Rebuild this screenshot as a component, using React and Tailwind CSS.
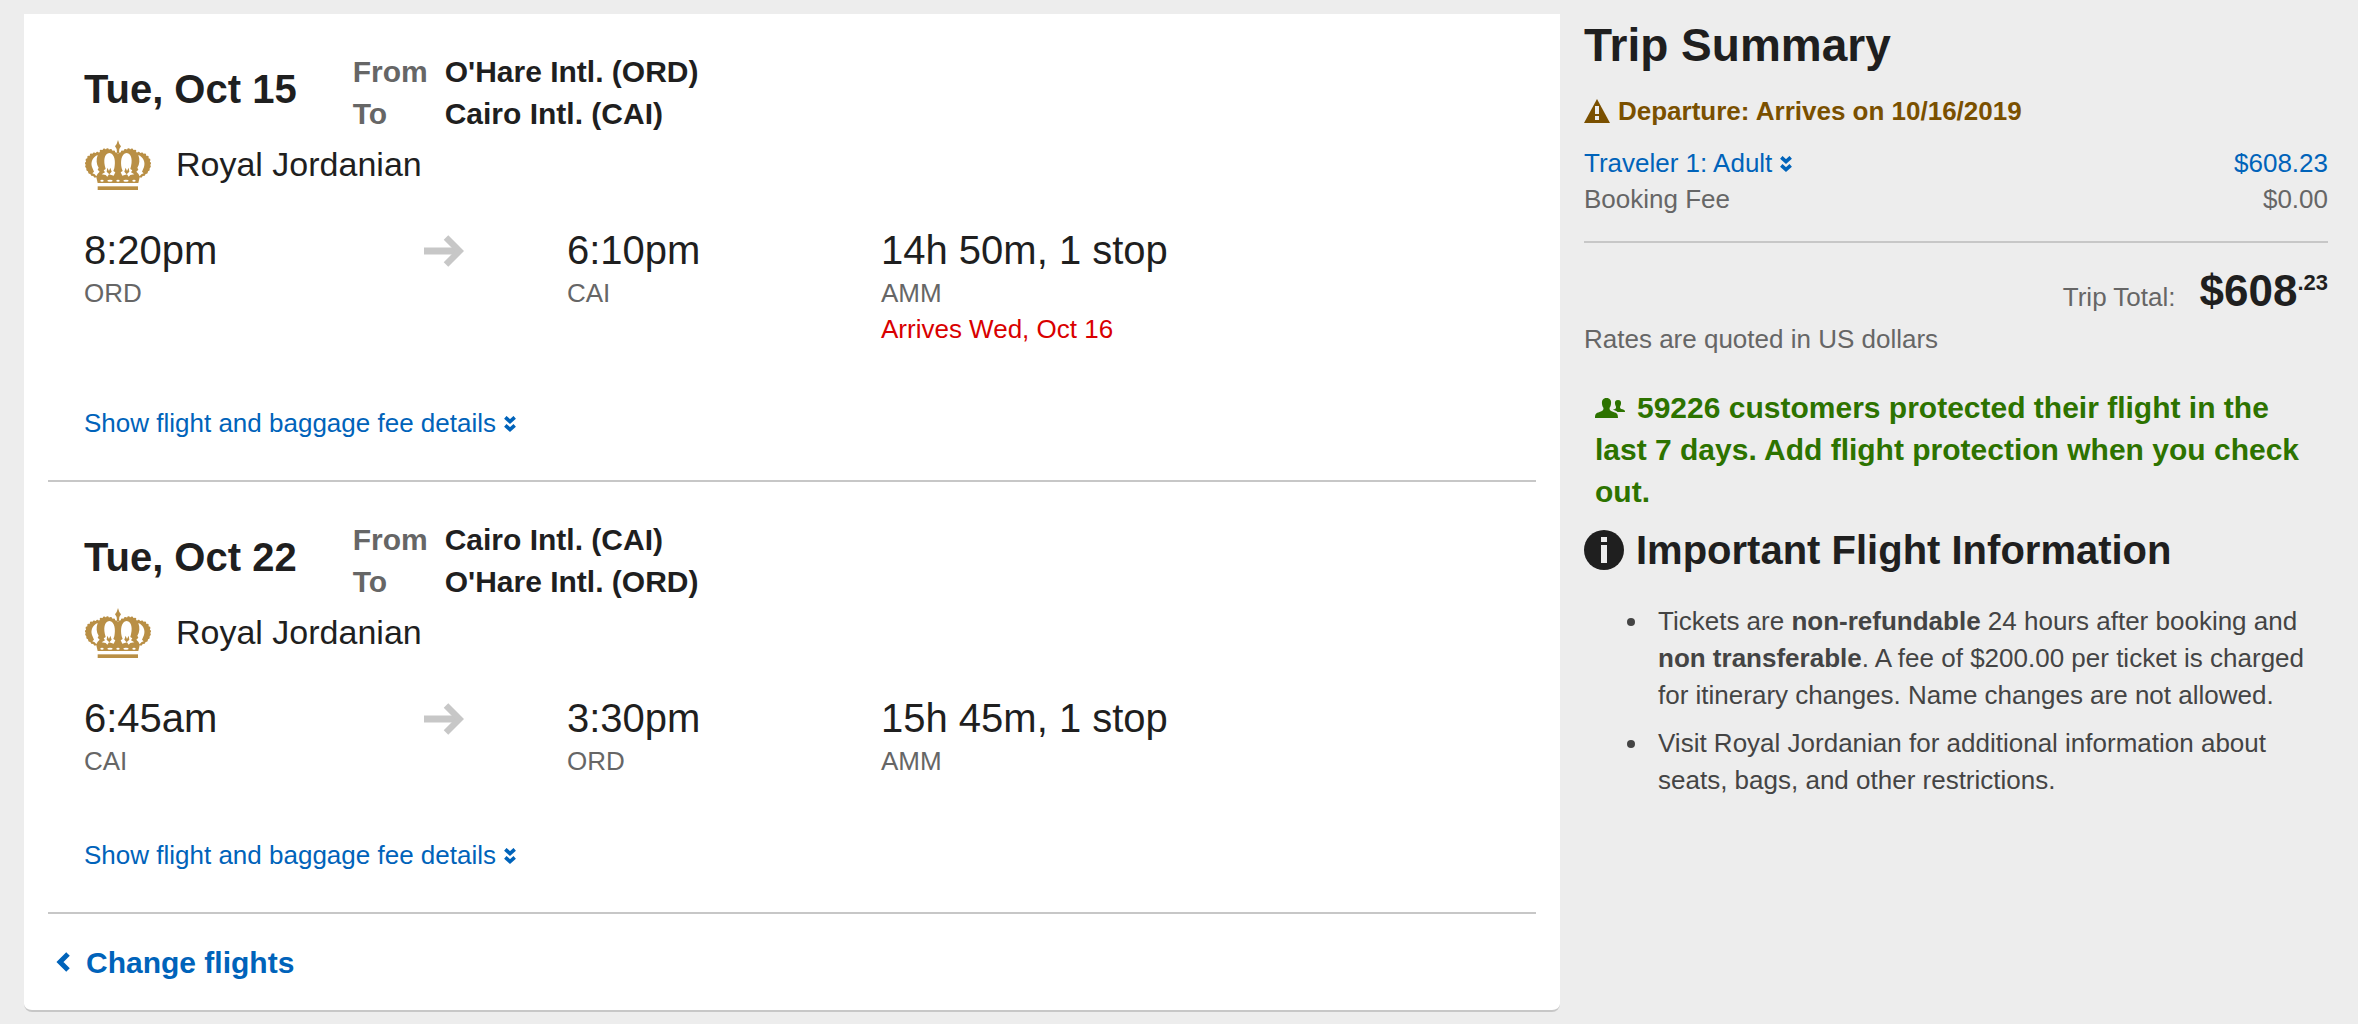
import React from 'react';

const flights = [
  {
    date: 'Tue, Oct 15',
    from: "O'Hare Intl. (ORD)",
    to: 'Cairo Intl. (CAI)',
    airline: 'Royal Jordanian',
    departTime: '8:20pm',
    departCode: 'ORD',
    arriveTime: '6:10pm',
    arriveCode: 'CAI',
    duration: '14h 50m, 1 stop',
    stop: 'AMM',
    notice: 'Arrives Wed, Oct 16',
  },
  {
    date: 'Tue, Oct 22',
    from: 'Cairo Intl. (CAI)',
    to: "O'Hare Intl. (ORD)",
    airline: 'Royal Jordanian',
    departTime: '6:45am',
    departCode: 'CAI',
    arriveTime: '3:30pm',
    arriveCode: 'ORD',
    duration: '15h 45m, 1 stop',
    stop: 'AMM',
  },
];

const CrownLogo = () => (
  <svg className="w-[68px] h-[50px] shrink-0" viewBox="43 33 204 150" aria-hidden="true">
    <g fill="#b98f45">
      <path d="M145 33 L149 45 L154 52 L149 60 L148 72 H142 L141 60 L136 52 L141 45 Z" />
      <path d="M84 162 L80 145 C60 138 46 122 48 104 C49 86 62 72 82 71 C88 71 92 69 94 65 C108 56 130 61 145 76 C160 61 182 56 196 65 C198 69 202 71 208 71 C228 72 241 86 242 104 C244 122 230 138 210 145 L206 162 Z" />
      <rect x="84" y="172" width="121" height="11" />
    </g>
    {/* beaded edge */}
    <g fill="none" stroke="#b98f45" strokeWidth="8" strokeLinecap="round" strokeDasharray="0 10">
      <path d="M76 142 C55 132 45 112 52 92 C58 78 70 73 88 72" />
      <path d="M214 142 C235 132 245 112 238 92 C232 78 220 73 202 72" />
      <path d="M94 66 C108 58 130 62 143 77" />
      <path d="M196 66 C182 58 160 62 147 77" />
    </g>
    <g fill="#fff">
      <path d="M84 78 C70 84 62 98 67 114 L73 128 L68 133 L75 136 L80 142 L84 134 L90 128 L84 122 L87 116 C80 106 79 92 84 78 Z" />
      <path d="M119 72 C104 74 100 94 108 120 L102 124 L106 130 L96 136 L108 138 L113 143 L118 136 L132 140 L137 130 L131 126 L134 118 C138 98 136 74 119 72 Z" />
      <path d="M206 78 C220 84 228 98 223 114 L217 128 L222 133 L215 136 L210 142 L206 134 L200 128 L206 122 L203 116 C210 106 211 92 206 78 Z" />
      <path d="M171 72 C186 74 190 94 182 120 L188 124 L184 130 L194 136 L182 138 L177 143 L172 136 L158 140 L153 130 L159 126 L156 118 C152 98 154 74 171 72 Z" />
      <ellipse cx="97" cy="155" rx="5" ry="3" />
      <ellipse cx="121" cy="155" rx="8" ry="3" />
      <ellipse cx="145" cy="155" rx="5" ry="3" />
      <ellipse cx="169" cy="155" rx="8" ry="3" />
      <ellipse cx="193" cy="155" rx="5" ry="3" />
    </g>
    <g fill="#b98f45">
      <path d="M113 116 L118 126 L122 116 L126 128 L119 136 L111 128 Z" />
      <path d="M177 116 L172 126 L168 116 L164 128 L171 136 L179 128 Z" />
    </g>
  </svg>
);

const DoubleChevron = () => (
  <svg className="inline-block ml-2 w-3 h-4 align-baseline" viewBox="0 0 12 16" fill="none" stroke="currentColor" strokeWidth="3.6" aria-hidden="true">
    <path d="M1.300 1.300 L6 5.500 L10.700 1.300 M1.300 9.300 L6 13.500 L10.700 9.300" />
  </svg>
);

const ArrowRight = () => (
  <svg className="w-10 h-8 mt-[10px]" viewBox="0 0 40 32" fill="none" stroke="#c7c7c7" strokeWidth="7" aria-hidden="true">
    <path d="M0 16 H35" />
    <path d="M22 2.500 L35.500 16 L22 29.500" strokeWidth="6.4" />
  </svg>
);

const FlightLeg = ({ flight }) => (
  <section className="mx-6 px-9 pt-[37px] pb-[39px] border-b-2 border-[#c7c7c7]">
    <div className="flex gap-14">
      <h2 className="text-[40px] leading-[76px] font-bold">{flight.date}</h2>
      <dl className="grid grid-cols-[92px_auto] text-[30px] leading-[42px] font-bold">
        <dt className="text-[#666]">From</dt>
        <dd>{flight.from}</dd>
        <dt className="text-[#666]">To</dt>
        <dd>{flight.to}</dd>
      </dl>
    </div>

    <div className="flex items-center gap-6 h-15">
      <CrownLogo />
      <span className="text-[34px] leading-10 pb-0.5">{flight.airline}</span>
    </div>

    <div className="grid grid-cols-[340fr_143fr_314fr_619fr] mt-[30px] text-[26px] leading-9 text-[#666]">
      <div>
        <p className="text-[40px] leading-[50px] text-[#1f1f1f]">{flight.departTime}</p>
        <p>{flight.departCode}</p>
      </div>
      <ArrowRight />
      <div>
        <p className="text-[40px] leading-[50px] text-[#1f1f1f]">{flight.arriveTime}</p>
        <p>{flight.arriveCode}</p>
      </div>
      <div>
        <p className="text-[40px] leading-[50px] text-[#1f1f1f]">{flight.duration}</p>
        <p>{flight.stop}</p>
        {flight.notice && <p className="text-[#d90000]">{flight.notice}</p>}
      </div>
    </div>

    <a href="#details" className="block mt-[58px] text-[26px] leading-9 text-[#0063ba]">
      Show flight and baggage fee details
      <DoubleChevron />
    </a>
  </section>
);

const TripSummary = () => (
  <aside className="pl-6 pt-px text-[26px] leading-9 text-[#666]">
    <h1 className="text-[46px] leading-[60px] font-bold text-[#1f1f1f]">Trip Summary</h1>

    <p className="flex items-center gap-2 mt-[18px] font-bold text-[#7a5000]">
      <svg className="w-[26px] h-6" viewBox="0 0 26 24" aria-hidden="true">
        <path d="M13 0 L26 24 H0 Z" fill="currentColor" />
        <path d="M11 7 H15 V15 H11 Z M11 17 H15 V21 H11 Z" fill="#ededed" />
      </svg>
      Departure: Arrives on 10/16/2019
    </p>

    <div className="flex justify-between mt-4 text-[#0063ba]">
      <a href="#traveler">
        Traveler 1: Adult
        <DoubleChevron />
      </a>
      <span>$608.23</span>
    </div>
    <div className="flex justify-between">
      <span>Booking Fee</span>
      <span>$0.00</span>
    </div>

    <div className="flex items-baseline justify-end gap-6 mt-6 pt-5 border-t-2 border-[#c7c7c7]">
      <span>Trip Total:</span>
      <span className="flex items-start font-bold text-[#1f1f1f]">
        <span className="text-[44px] leading-[56px]">$608</span>
        <span className="text-[22px] leading-10">.23</span>
      </span>
    </div>
    <p className="mt-0.5">Rates are quoted in US dollars</p>

    <p className="mt-[30px] px-[11px] text-[30px] leading-[42px] font-bold text-[#2d7300]">
      <svg className="inline-block w-[30px] h-5 mr-3 align-baseline" viewBox="0 0 30 20" fill="currentColor" aria-hidden="true">
        <path d="M11.500 0 C15 0 16.500 2.500 16 6 C15.800 8 15 9 14.500 10 C14.500 12.500 15.500 13 18.500 14 C22 15 23 16 23 20 H0 C0 16 1 15 4.500 14 C7.500 13 8.500 12.500 8.500 10 C8 9 7.200 8 7 6 C6.500 2.500 8 0 11.500 0 Z" />
        <path d="M23 2 C25.500 2 26.300 3.500 26 6 C25.800 7.200 25.300 8 25 8.700 C25 10.500 25.500 10.700 27.500 11.300 C29.500 12 30 12.500 30 14 H22.500 C21 12.500 19 12 17.800 11.700 C20.500 11 21.200 10.500 21 8.700 C20.700 8 20.200 7.200 20 6 C19.700 3.500 20.500 2 23 2 Z" />
      </svg>
      59226 customers protected their flight in the last 7 days. Add flight protection when you check out.
    </p>

    <h2 className="flex items-center gap-3 mt-2 text-[40px] leading-[58px] font-bold text-[#1f1f1f]">
      <svg className="w-10 h-10 shrink-0" viewBox="0 0 40 40" aria-hidden="true">
        <circle cx="20" cy="20" r="20" fill="currentColor" />
        <path d="M17 7 H23 V12 H17 Z M17 15 H23 V33 H17 Z" fill="#ededed" />
      </svg>
      Important Flight Information
    </h2>

    <ul className="mt-6 ml-[66px] list-disc leading-[37px] text-[#444]">
      <li className="pl-2">
        Tickets are <b>non-refundable</b> 24 hours after booking and <b>non transferable</b>. A fee of
        $200.00 per ticket is charged for itinerary changes. Name changes are not allowed.
      </li>
      <li className="pl-2 mt-[11px]">
        Visit Royal Jordanian for additional information about seats, bags, and other restrictions.
      </li>
    </ul>
  </aside>
);

const App = () => {
  return (
    <div className="min-h-screen bg-[#ededed] pl-6 pr-[30px] pt-3.5 pb-3 font-['Liberation_Sans',Arial,sans-serif] text-[#1f1f1f]">
      <div className="grid grid-cols-[2fr_1fr] items-start">
        <main className="bg-white rounded-b-lg border-b-2 border-[#c7c7c7]">
          {flights.map((flight) => (
            <FlightLeg key={flight.date} flight={flight} />
          ))}
          <a href="#flights" className="flex items-center gap-4 mx-8 h-24 text-[30px] font-bold text-[#0063ba]">
            <svg className="w-[14px] h-5" viewBox="0 0 14 20" fill="none" stroke="currentColor" strokeWidth="5" aria-hidden="true">
              <path d="M12 2 L4 10 L12 18" />
            </svg>
            Change flights
          </a>
        </main>
        <TripSummary />
      </div>
    </div>
  );
};

export default App;
